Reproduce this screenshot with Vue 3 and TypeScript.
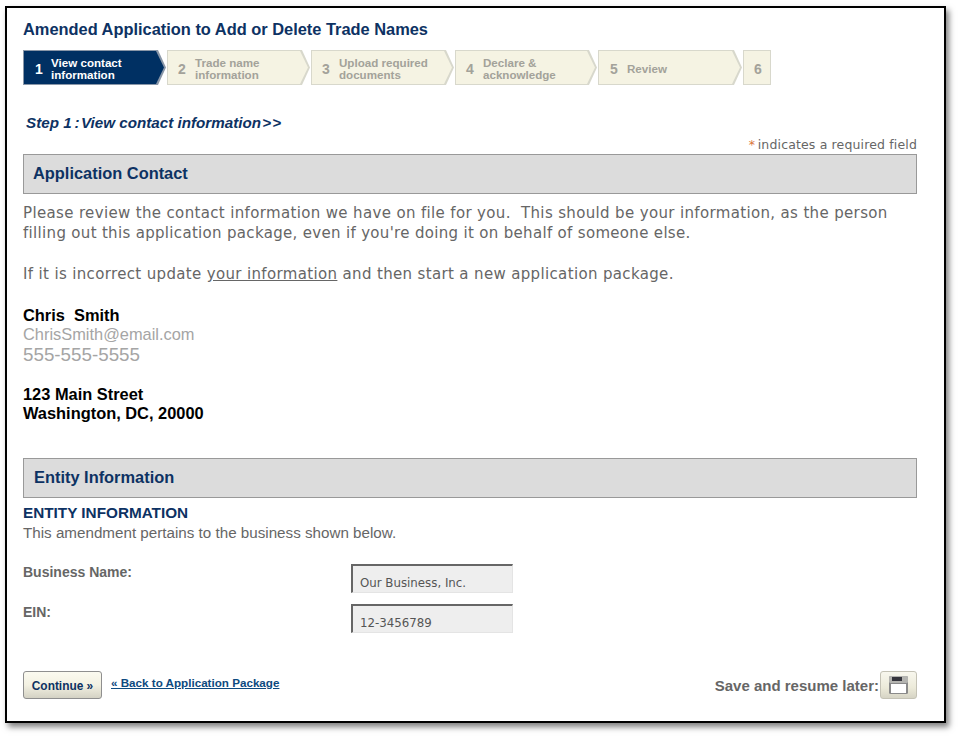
<script setup lang="ts">
interface Step { n: string; lines: string[]; width: number; active?: boolean; last?: boolean }
const steps: Step[] = [
  { n: '1', lines: ['View contact', 'information'], width: 143, active: true },
  { n: '2', lines: ['Trade name', 'information'], width: 143 },
  { n: '3', lines: ['Upload required', 'documents'], width: 143 },
  { n: '4', lines: ['Declare &', 'acknowledge'], width: 142 },
  { n: '5', lines: ['Review'], width: 144 },
  { n: '6', lines: [], width: 28, last: true },
]
</script>

<template>
  <div class="page">
    <main class="frame">
      <h1 class="title">Amended Application to Add or Delete Trade Names</h1>
      <ol class="steps">
        <li
          v-for="s in steps"
          :key="s.n"
          class="step"
          :class="{ active: s.active, last: s.last }"
          :style="{ width: s.width + 'px' }"
        >
          <div class="step-inner">
            <span class="num">{{ s.n }}</span>
            <span v-if="s.lines.length" class="label">
              <span v-for="l in s.lines" :key="l" class="label-line">{{ l }}</span>
            </span>
          </div>
        </li>
      </ol>
      <h2 class="step-title">Step 1&thinsp;:&#8202;View contact information&#8202;&gt;&#8202;&gt;</h2>
      <p class="required"><span class="star">*</span>&thinsp;indicates a required field</p>
      <h3 class="band">Application Contact</h3>
      <p class="copy first">Please review the contact information we have on file for you.&nbsp; This should be your information, as the person<br><span class="tight">filling out this application package, even if you're doing it on behalf of someone else.</span></p>
      <p class="copy second">If it is incorrect update <a class="inline-link" href="#">your information</a> and then start a new application package.</p>
      <div class="contact">
        <div class="strong">Chris&nbsp; Smith</div>
        <div class="email">ChrisSmith@email.com</div>
        <div class="phone">555-555-5555</div>
      </div>
      <div class="address">
        <div class="strong">123 Main Street</div>
        <div class="strong">Washington, DC, 20000</div>
      </div>
      <h3 class="band band-two">Entity Information</h3>
      <h4 class="entity-title">ENTITY INFORMATION</h4>
      <p class="entity-note">This amendment pertains to the business shown below.</p>
      <div class="fields">
        <div class="field-label">Business Name:</div>
        <div class="field-value">Our Business, Inc.</div>
        <div class="field-label">EIN:</div>
        <div class="field-value">12-3456789</div>
      </div>
      <footer class="actions">
        <button class="btn" type="button">Continue »</button>
        <a class="back" href="#">« Back to Application Package</a>
        <span class="save-label">Save and resume later:</span>
        <button class="btn-save" type="button" aria-label="Save">
          <svg width="19" height="18" viewBox="0 0 19 18">
            <rect x="0" y="0" width="19" height="18" rx="1.5" fill="#8a8a8a" />
            <rect x="0" y="0" width="19" height="7" rx="1.5" fill="#b4b4b0" />
            <rect x="3" y="1" width="10" height="4" fill="#35353c" />
            <rect x="2" y="8" width="15" height="9" fill="#fff" />
          </svg>
        </button>
      </footer>
    </main>
  </div>
</template>

<style>
html, body { margin: 0; background: #fff; }
</style>

<style scoped>
.page {
  width: 959px;
  height: 738px;
  box-sizing: border-box;
  padding: 6px 0 0 5px;
  overflow: hidden;
  background: #fff;
}
.frame {
  width: 941px;
  height: 717px;
  box-sizing: border-box;
  border: 2px solid #000;
  padding: 12px 27px 0 16px;
  background: #fff;
  box-shadow: 3px 4px 6px rgba(0, 0, 0, 0.5);
  font-family: "Liberation Sans", Arial, sans-serif;
}
.title {
  margin: 0;
  font-size: 16.4px;
  line-height: 18px;
  font-weight: 700;
  color: #0d3263;
}
.steps {
  display: flex;
  gap: 1px;
  list-style: none;
  margin: 12px 0 0;
  padding: 0;
  height: 35px;
}
.step {
  background: #d8d8cc;
  clip-path: polygon(0 0, calc(100% - 8px) 0, 100% 50%, calc(100% - 8px) 100%, 0 100%);
  padding: 1px 2px 1px 1px;
  box-sizing: border-box;
}
.step-inner {
  height: 100%;
  background: #f5f3e3;
  clip-path: polygon(0 0, calc(100% - 8px) 0, 100% 50%, calc(100% - 8px) 100%, 0 100%);
  display: flex;
  align-items: center;
  padding-left: 10px;
  color: #a3a29a;
  font-weight: 700;
  padding-top: 2px;
  box-sizing: border-box;
}
.step:nth-child(5) .step-inner { padding-left: 11px; }
.step.active .step-inner { padding-left: 11px; }
.step.active .num { width: 16px; }
.step.last { padding: 1px; }
.step.last, .step.last .step-inner { clip-path: none; }
.step.last .step-inner { padding-left: 10px; }
.step.active { background: #8a97a8; }
.step.active .step-inner { background: #003063; color: #fff; }
.num { font-size: 14px; width: 17px; flex: none; }
.label { font-size: 11.6px; line-height: 12px; display: flex; flex-direction: column; }
.label-line { display: block; white-space: nowrap; }
.step-title {
  margin: 29px 0 0 3px;
  font-size: 15.2px;
  line-height: 18px;
  font-weight: 700;
  font-style: italic;
  color: #0d3263;
}
.required {
  margin: 5px 0 0;
  text-align: right;
  font-family: "DejaVu Sans", sans-serif;
  font-size: 12.5px;
  letter-spacing: 0.15px;
  line-height: 15px;
  color: #666;
}
.star { color: #d9763c; }
.band {
  margin: 2px 0 0;
  height: 40px;
  box-sizing: border-box;
  border: 1px solid #999;
  background: #dcdcdc;
  padding-left: 9px;
  font-size: 16.4px;
  line-height: 36px;
  font-weight: 700;
  color: #0d3263;
}
.copy {
  margin: 0;
  font-family: "DejaVu Sans", sans-serif;
  font-size: 15px;
  letter-spacing: 0.35px;
  line-height: 20px;
  color: #666;
  white-space: nowrap;
}
.tight { letter-spacing: 0.32px; }
.copy.first { margin-top: 9px; }
.copy.second { margin-top: 21px; }
.inline-link { color: #666; text-decoration: underline; }
.contact { margin-top: 22px; }
.strong { font-size: 16.4px; line-height: 19px; font-weight: 700; color: #000; }
.email { font-size: 16.4px; line-height: 19px; color: #a5a5a5; }
.phone { font-size: 18.8px; line-height: 21px; color: #a5a5a5; }
.address { margin-top: 20px; }
.band.band-two { margin-top: 35px; padding-left: 10px; }
.entity-title {
  margin: 6px 0 0;
  font-size: 15.3px;
  line-height: 18px;
  font-weight: 700;
  color: #0d3263;
}
.entity-note {
  margin: 2px 0 0;
  font-size: 15.2px;
  line-height: 17px;
  color: #666;
}
.fields {
  display: grid;
  grid-template-columns: 328px 162px;
  grid-auto-rows: 29px;
  row-gap: 11px;
  margin-top: 23px;
}
.field-label {
  font-size: 14px;
  line-height: 16px;
  font-weight: 700;
  color: #666;
}
.field-value {
  box-sizing: border-box;
  background: #eee;
  border: 1px solid #e4e4e4;
  border-top: 2px solid #666;
  border-left: 2px solid #666;
  padding: 10px 0 0 7px;
  font-family: "DejaVu Sans", sans-serif;
  font-size: 11.8px;
  line-height: 14px;
  color: #555;
}
.actions {
  display: flex;
  align-items: flex-start;
  margin-top: 38px;
}
.btn {
  width: 79px;
  height: 28px;
  border: 1px solid #8f8f8f;
  border-radius: 3px;
  background: linear-gradient(#fbfaf0, #f3f1e2 50%, #d4d2c4);
  padding: 2px 0 0;
  font-family: inherit;
  font-size: 11.9px;
  font-weight: 700;
  color: #0d3263;
}
.back {
  margin: 5px 0 0 9px;
  font-size: 11.65px;
  line-height: 14px;
  font-weight: 700;
  color: #0d4a80;
}
.save-label {
  margin: 6px 1px 0 auto;
  font-size: 15px;
  line-height: 18px;
  font-weight: 700;
  color: #666;
}
.btn-save {
  width: 37px;
  height: 28px;
  display: flex;
  align-items: center;
  justify-content: center;
  border: 1px solid #c4c2b5;
  border-radius: 3px;
  background: linear-gradient(#f8f7ee, #ecead9 60%, #d6d4c5);
  padding: 0;
}
</style>
